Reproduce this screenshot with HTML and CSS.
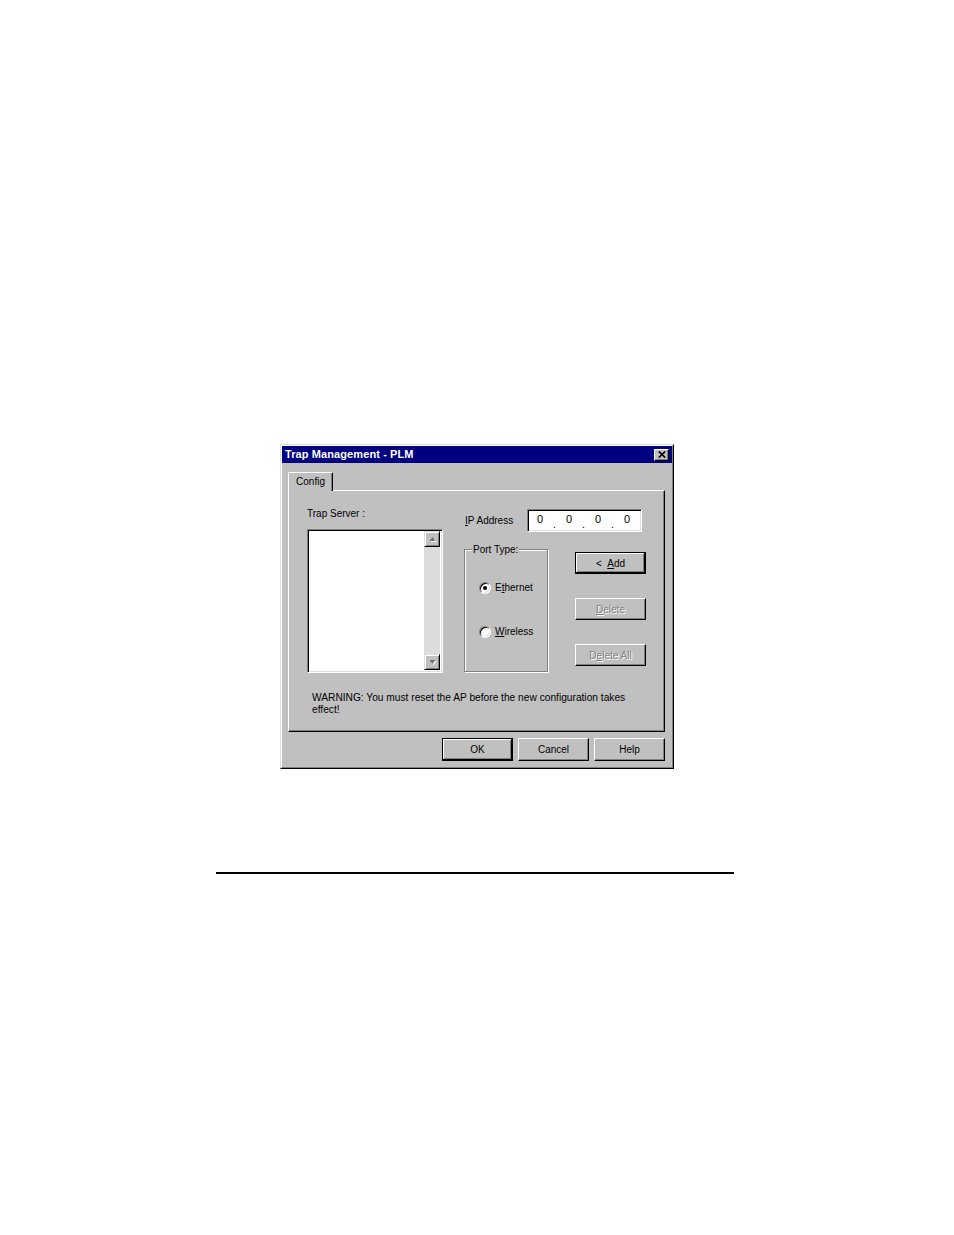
FILE: index.html
```html
<!DOCTYPE html>
<html lang="en">
<head>
<meta charset="utf-8">
<title>Trap Management - PLM</title>
<link rel="stylesheet" href="styles.css">
</head>
<body>
<div class="page">
  <div class="dialog">
    <div class="dialog-inner">
      <div class="titlebar">
        <span class="title">Trap Management - PLM</span>
        <span class="close-btn">
          <svg width="8" height="7" viewBox="0 0 8 7"><path d="M0.8 0.5L7.2 6.5M7.2 0.5L0.8 6.5" stroke="#000" stroke-width="1.7" fill="none"/></svg>
        </span>
      </div>
      <div class="dialog-body">
        <div class="tabstrip">
          <div class="tab">Config</div>
        </div>
        <div class="panel">
          <div class="panel-main">
            <div class="col-list">
              <div class="label">Trap Server :</div>
              <div class="listbox">
                <div class="list-area"></div>
                <div class="scrollbar">
                  <span class="sb-btn">
                    <svg width="9" height="6" viewBox="0 0 9 6"><polygon points="1.5,5 4.5,1 7.5,5" fill="#fff" transform="translate(1,1)"/><polygon points="1.5,5 4.5,1 7.5,5" fill="#707070"/></svg>
                  </span>
                  <span class="sb-track"></span>
                  <span class="sb-btn">
                    <svg width="9" height="6" viewBox="0 0 9 6"><polygon points="1.5,1 4.5,5 7.5,1" fill="#fff" transform="translate(1,1)"/><polygon points="1.5,1 4.5,5 7.5,1" fill="#707070"/></svg>
                  </span>
                </div>
              </div>
            </div>
            <div class="col-right">
              <div class="ip-row">
                <span class="ip-label"><u>I</u>P Address</span>
                <div class="ipbox">
                  <span class="ip-field">0</span><span class="ip-dot">.</span>
                  <span class="ip-field">0</span><span class="ip-dot">.</span>
                  <span class="ip-field">0</span><span class="ip-dot">.</span>
                  <span class="ip-field">0</span>
                </div>
              </div>
              <div class="group-row">
                <fieldset class="group">
                  <legend>Port Type:</legend>
                  <div class="radios">
                    <div class="radio-row"><span class="radio checked"></span><span>E<u>t</u>hernet</span></div>
                    <div class="radio-row"><span class="radio"></span><span><u>W</u>ireless</span></div>
                  </div>
                </fieldset>
                <div class="btn-col">
                  <div class="btn default">&lt;&nbsp;&nbsp;<u>A</u>dd</div>
                  <div class="btn disabled"><u>D</u>elete</div>
                  <div class="btn disabled">D<u>e</u>lete All</div>
                </div>
              </div>
            </div>
          </div>
          <p class="warning">WARNING: You must reset the AP before the new configuration takes<br>effect!</p>
        </div>
        <div class="btn-row">
          <div class="btn default wide">OK</div>
          <div class="btn wide">Cancel</div>
          <div class="btn wide">Help</div>
        </div>
      </div>
    </div>
  </div>
  <div class="rule"></div>
</div>
</body>
</html>
```

FILE: styles.css
```css
* { box-sizing: border-box; }

html, body {
  margin: 0;
  padding: 0;
  background: #fff;
}

body {
  font-family: "Liberation Sans", Arial, sans-serif;
  font-size: 10px;
  line-height: 13px;
  color: #000;
}

.page {
  padding-top: 444px;
}

.dialog {
  margin-left: 280px;
  width: 394px;
  height: 325px;
  background: #c0c0c0;
  border: 1px solid;
  border-color: #dfdfdf #000 #000 #dfdfdf;
}

.dialog-inner {
  height: 100%;
  border: 1px solid;
  border-color: #fff #808080 #808080 #fff;
  display: flex;
  flex-direction: column;
}

.titlebar {
  height: 17px;
  background: #000080;
  color: #fff;
  display: flex;
  align-items: center;
  justify-content: space-between;
  padding: 0 3px 0 3px;
}

.title {
  font-size: 11px;
  font-weight: bold;
  letter-spacing: 0.1px;
}

.close-btn {
  width: 15px;
  height: 12px;
  background: #c0c0c0;
  border: 1px solid;
  border-color: #fff #000 #000 #fff;
  box-shadow: inset -1px -1px 0 #808080;
  display: flex;
  align-items: center;
  justify-content: center;
}

.close-btn svg { display: block; }

.dialog-body {
  padding: 9px 7px 0 6px;
  display: flex;
  flex-direction: column;
}

.tabstrip {
  height: 18px;
  display: flex;
  align-items: flex-end;
}

.tab {
  position: relative;
  z-index: 1;
  width: 45px;
  height: 19px;
  margin-bottom: -1px;
  background: #c0c0c0;
  border: 1px solid;
  border-bottom: none;
  border-color: #fff #000 #000 #fff;
  border-radius: 2px 2px 0 0;
  box-shadow: inset -1px 0 0 #808080;
  display: flex;
  align-items: center;
  justify-content: center;
  padding-bottom: 1px;
}

.panel {
  height: 242px;
  border: 1px solid;
  border-color: #fff #000 #000 #fff;
  box-shadow: inset -1px -1px 0 #808080;
  padding: 16px 0 0 18px;
}

.panel-main {
  display: flex;
  align-items: flex-start;
}

.col-list {
  width: 136px;
  display: flex;
  flex-direction: column;
}

.label {
  height: 13px;
  margin-bottom: 9px;
}

.listbox {
  height: 144px;
  border: 1px solid;
  border-color: #808080 #fff #fff #808080;
  box-shadow: inset 1px 1px 0 #000, inset -1px -1px 0 #dfdfdf;
  padding: 1px 2px 2px 1px;
  display: flex;
  background: #fff;
}

.list-area {
  flex: 1;
  background: #fff;
}

.scrollbar {
  width: 16px;
  display: flex;
  flex-direction: column;
}

.sb-btn {
  height: 16px;
  background: #c0c0c0;
  border: 1px solid;
  border-color: #dfdfdf #000 #000 #dfdfdf;
  box-shadow: inset 1px 1px 0 #fff, inset -1px -1px 0 #808080;
  display: flex;
  align-items: center;
  justify-content: center;
}

.sb-btn svg { display: block; }

.sb-track {
  flex: 1;
  background: #dcdcdc;
}

.col-right {
  margin-left: 21px;
  display: flex;
  flex-direction: column;
}

.ip-row {
  margin-top: 2px;
  display: flex;
  align-items: center;
}

.ip-label {
  width: 63px;
  padding-left: 1px;
}

.ipbox {
  width: 115px;
  height: 23px;
  background: #fff;
  border: 1px solid;
  border-color: #808080 #fff #fff #808080;
  box-shadow: inset 1px 1px 0 #000, inset -1px -1px 0 #dfdfdf;
  display: flex;
  align-items: flex-start;
  padding: 3px 0 0 1px;
  font-size: 11px;
}

.ip-field {
  width: 22px;
  text-align: center;
}

.ip-dot {
  width: 7px;
  text-align: center;
  padding-top: 5px;
}

.group-row {
  margin-top: 11px;
  display: flex;
  align-items: flex-start;
}

.group {
  margin: 0;
  width: 84px;
  height: 129px;
  padding: 0 0 0 14px;
  border: 1px solid #808080;
  box-shadow: inset 1px 1px 0 #fff, 1px 1px 0 #fff;
  min-width: 0;
}

.group legend {
  margin-left: -7px;
  padding: 0 1px;
  background: #c0c0c0;
  font-size: 10px;
  line-height: 13px;
}

.radios {
  display: flex;
  flex-direction: column;
  gap: 31px;
  padding-top: 25px;
}

.radio-row {
  display: flex;
  align-items: center;
  gap: 4px;
  height: 13px;
}

.radio {
  width: 12px;
  height: 12px;
  border-radius: 50%;
  border: 1px solid;
  border-color: #808080 #fff #fff #808080;
  box-shadow: inset 1px 1px 0 #000, inset -1px -1px 0 #dfdfdf;
  background: #fff;
  display: flex;
  align-items: center;
  justify-content: center;
}

.radio.checked::after {
  content: "";
  width: 4px;
  height: 4px;
  border-radius: 50%;
  background: #000;
}

.btn-col {
  margin-left: 27px;
  margin-top: 9px;
  display: flex;
  flex-direction: column;
  gap: 24px;
}

.btn {
  width: 71px;
  height: 22px;
  background: #c0c0c0;
  border: 1px solid;
  border-color: #fff #000 #000 #fff;
  box-shadow: inset -1px -1px 0 #808080;
  display: flex;
  align-items: center;
  justify-content: center;
}

.btn.default {
  border-color: #000;
  box-shadow: inset -1px -1px 0 #000, inset 1px 1px 0 #fff, inset -2px -2px 0 #808080;
}

.btn.disabled {
  color: #808080;
  text-shadow: 1px 1px 0 #fff;
}

.warning {
  margin: 19px 0 0 5px;
  font-size: 10.2px;
  line-height: 12px;
}

.btn-row {
  margin-top: 6px;
  display: flex;
  justify-content: flex-end;
  gap: 5px;
}

.btn.wide {
  height: 23px;
}

.rule {
  margin: 103px 0 0 216px;
  width: 518px;
  height: 2px;
  background: #000;
}
```
